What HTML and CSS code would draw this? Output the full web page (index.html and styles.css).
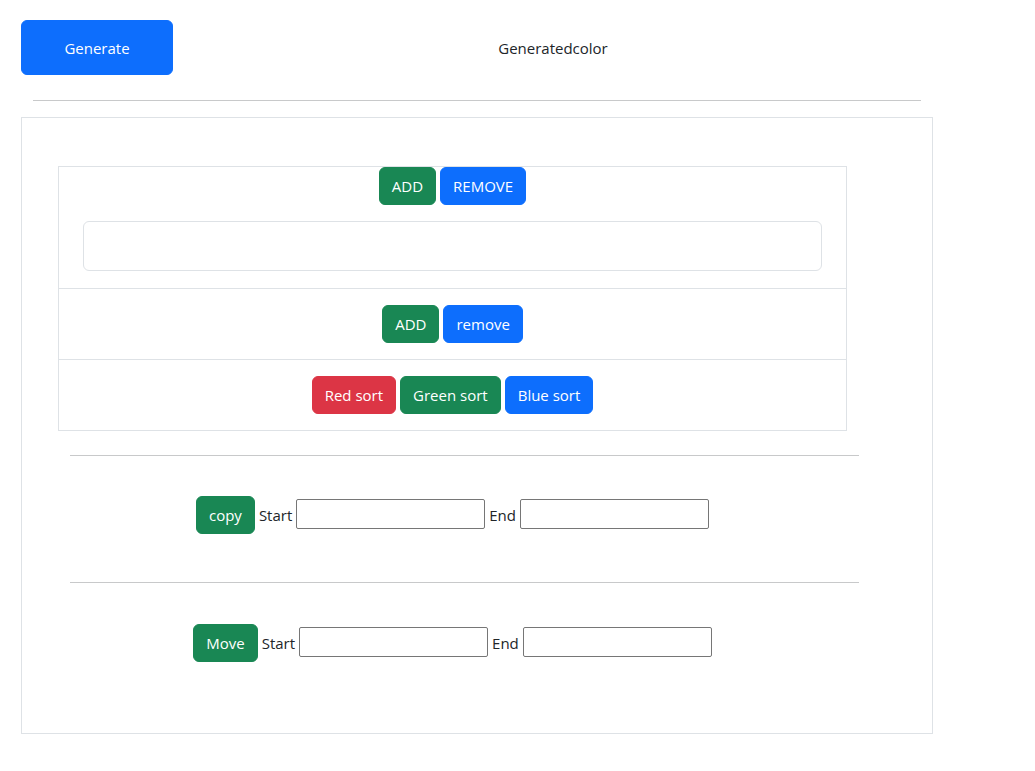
FILE: index.html
```html
<!DOCTYPE html>
<html>
<head>
<meta charset="utf-8">
<link rel="stylesheet" href="styles.css">
</head>
<body>
<div class="page">
  <div class="header">
    <button class="btn btn-primary btn-generate">Generate</button>
    <div class="title">Generatedcolor</div>
  </div>
  <hr class="top-rule">
  <div class="panel">
    <div class="inner">
      <div class="list">
        <div class="item item-first">
          <div class="btn-row">
            <button class="btn btn-success">ADD</button>
            <button class="btn btn-primary">REMOVE</button>
          </div>
          <div class="color-box"></div>
        </div>
        <div class="item">
          <div class="btn-row">
            <button class="btn btn-success">ADD</button>
            <button class="btn btn-primary">remove</button>
          </div>
        </div>
        <div class="item">
          <div class="btn-row">
            <button class="btn btn-danger">Red sort</button>
            <button class="btn btn-success">Green sort</button>
            <button class="btn btn-primary">Blue sort</button>
          </div>
        </div>
      </div>
      <hr class="rule">
      <div class="range-row">
        <button class="btn btn-success">copy</button>
        <label class="lbl">Start</label>
        <input class="field" type="text">
        <label class="lbl">End</label>
        <input class="field" type="text">
      </div>
      <hr class="rule rule-2">
      <div class="range-row range-move">
        <button class="btn btn-success">Move</button>
        <label class="lbl">Start</label>
        <input class="field" type="text">
        <label class="lbl">End</label>
        <input class="field" type="text">
      </div>
    </div>
  </div>
</div>
</body>
</html>
```

FILE: styles.css
```css
* { box-sizing: border-box; }
body {
  margin: 0;
  font-family: "Open Sans", "Noto Sans", sans-serif;
  color: #212529;
  background: #fff;
}
.page {
  padding: 20px 0 0 21px;
  width: 933px;
}
.header {
  display: flex;
  align-items: center;
  height: 55px;
}
.btn {
  font-family: inherit;
  font-size: 15px;
  line-height: 24px;
  padding: 6px 12px;
  border: 1px solid transparent;
  border-radius: 6px;
  color: #fff;
  cursor: pointer;
}
.btn-primary { background: #0d6efd; border-color: #0d6efd; }
.btn-success { background: #198754; border-color: #198754; }
.btn-danger { background: #dc3545; border-color: #dc3545; }
.btn-generate {
  width: 152px;
  height: 55px;
  font-size: 15px;
}
.title {
  flex: 1;
  text-align: center;
  font-size: 15px;
}
.top-rule {
  margin: 25px 0 0 12px;
  width: 888px;
  border: 0;
  border-top: 1px solid #c8c9ca;
  height: 0;
}
.panel {
  margin-top: 16px;
  border: 1px solid #dee2e6;
  padding: 48px 0 71px 36px;
  width: 912px;
}
.inner { width: 789px; }
.list {
  border: 1px solid #dee2e6;
}
.item {
  border-top: 1px solid #dee2e6;
  padding: 16px 24px;
}
.item-first {
  border-top: 0;
  padding: 0 24px 17px;
}
.btn-row {
  display: flex;
  justify-content: center;
  gap: 4px;
}
.color-box {
  margin-top: 16px;
  height: 50px;
  border: 1px solid #dee2e6;
  border-radius: 6px;
}
.rule {
  margin: 24px 0 0 12px;
  width: 789px;
  border: 0;
  border-top: 1px solid #c8c9ca;
  height: 0;
}
.range-row {
  margin-top: 40px;
  display: flex;
  justify-content: center;
  align-items: center;
  gap: 4px;
}
.rule-2 { margin-top: 48px; }
.range-move { margin-top: 41px; }
.lbl { font-size: 15px; }
.field {
  width: 189px;
  height: 30px;
  margin-bottom: 3px;
  border: 1px solid #767676;
  border-radius: 2px;
  font-family: inherit;
}
```
